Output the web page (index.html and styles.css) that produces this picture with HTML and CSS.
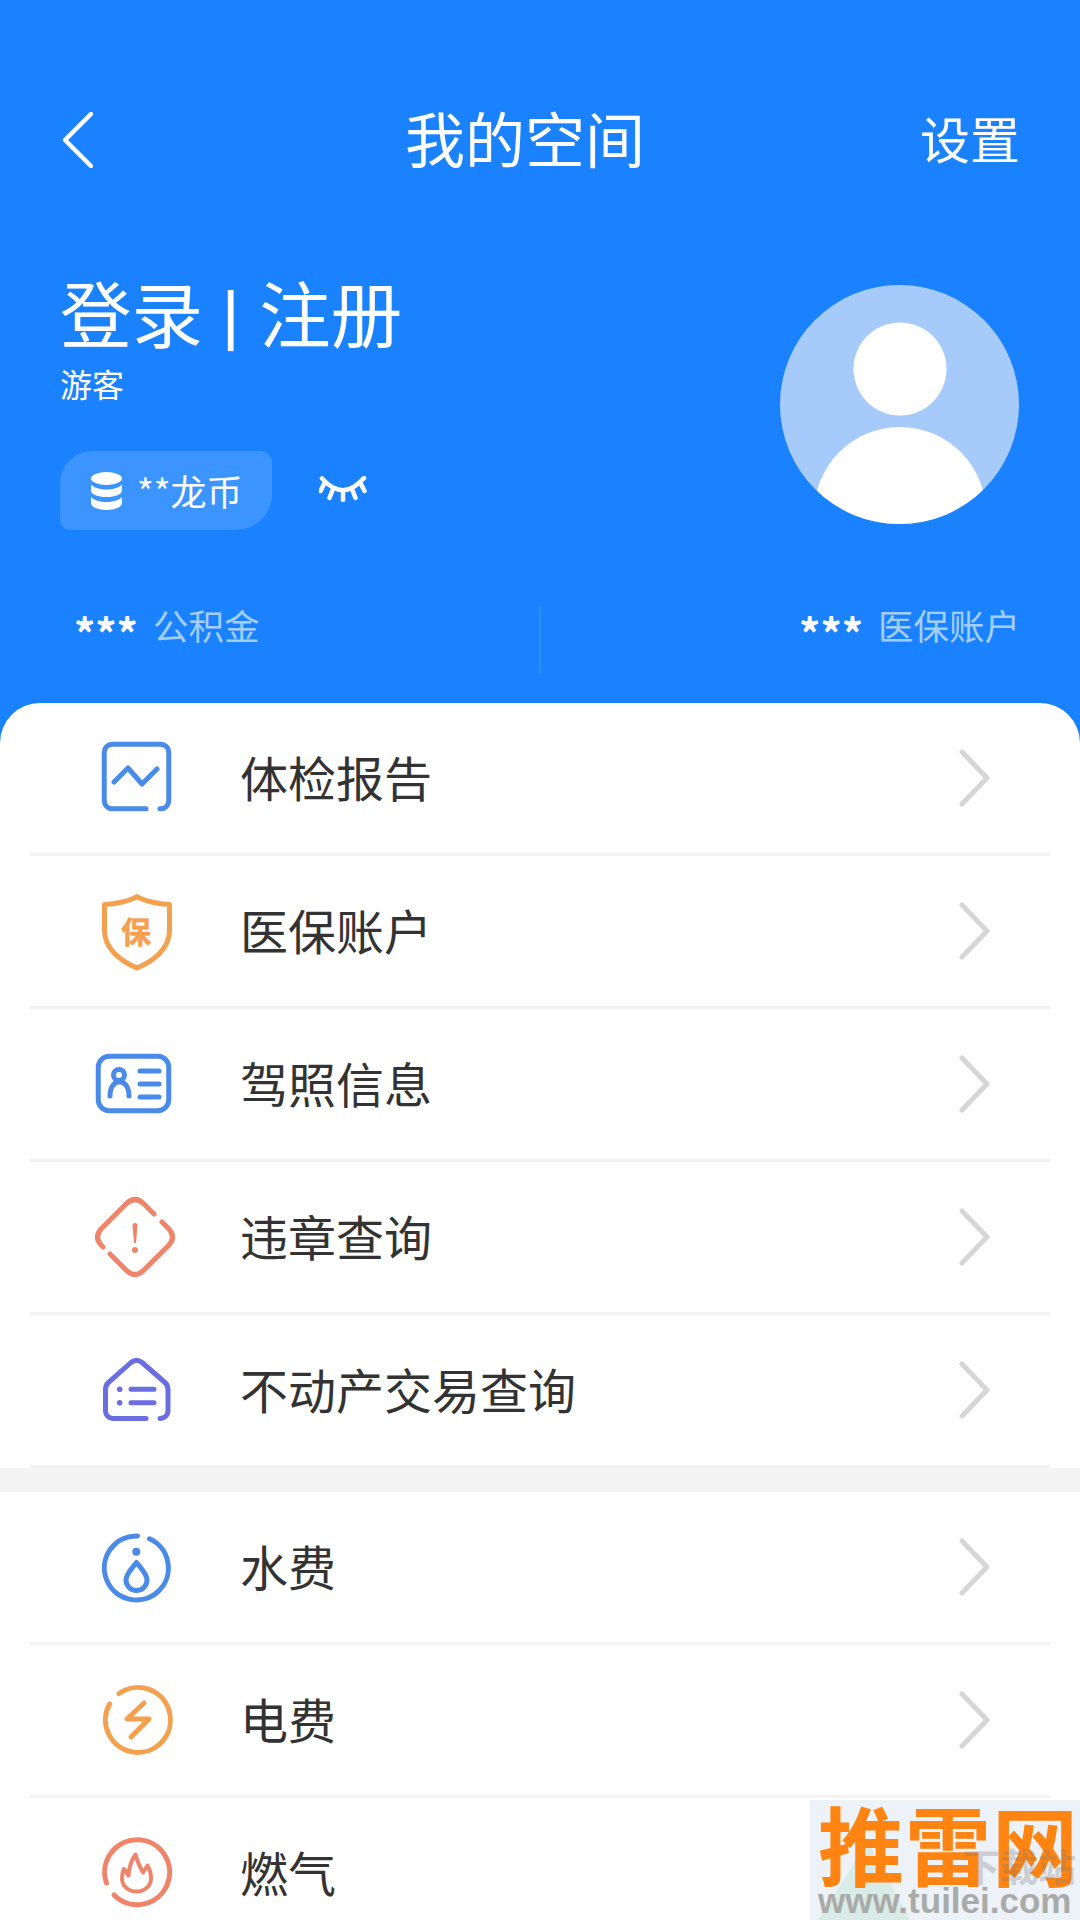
FILE: index.html
```html
<!DOCTYPE html>
<html lang="zh-CN">
<head>
<meta charset="utf-8">
<title>我的空间</title>
<link rel="stylesheet" href="styles.css">
</head>
<body>
<div class="app">
  <header class="hero">
    <nav class="nav">
      <div class="nav-back">
        <svg width="30" height="56" viewBox="0 0 30 56"><path class="line-white" d="M28 2 2 28l26 26"/></svg>
      </div>
      <h1 class="nav-title">我的空间</h1>
      <div class="nav-action">设置</div>
    </nav>
    <section class="profile">
      <div class="profile-info">
        <div class="profile-name">登录<span class="name-sep"> | </span>注册</div>
        <div class="profile-role">游客</div>
        <div class="coin-line">
          <div class="coin-pill">
            <svg width="31" height="38" viewBox="0 0 31 38"><ellipse cx="15.5" cy="6.5" rx="15.5" ry="6.5" fill="#fff"/><path fill="#fff" d="M0 12.5C3 16 9 17.5 15.5 17.5S28 16 31 12.5V18.500C31 22.500 24 25 15.500 25S0 22.500 0 18.500Z"/><path fill="#fff" d="M0 25C3 28.500 9 30 15.500 30S28 28.500 31 25V31C31 35 24 38 15.500 38S0 35 0 31Z"/></svg>
            <span class="coin-text">**龙币</span>
          </div>
          <svg class="eye" width="48" height="26" viewBox="0 0 48 26"><path class="line-white thin" d="M3 2.500Q24 26 45 2M5 8 1.500 15M14 13l-3.500 9M24 15v9M33 13l3.500 9M42 8l3.500 7"/></svg>
        </div>
      </div>
      <svg class="avatar" width="239" height="239" viewBox="0 0 239 239">
        <defs><clipPath id="avatar-clip"><circle cx="119.500" cy="119.500" r="119.500"/></clipPath></defs>
        <circle cx="119.500" cy="119.500" r="119.500" fill="#a6cbfb"/>
        <circle cx="120" cy="84" r="46.500" fill="#fff"/>
        <circle cx="120" cy="228" r="86" fill="#fff" clip-path="url(#avatar-clip)"/>
      </svg>
    </section>
    <section class="stats">
      <div class="stat stat-left"><span class="stat-stars">***</span><span class="stat-label">公积金</span></div>
      <div class="stat-divider"></div>
      <div class="stat stat-right"><span class="stat-stars">***</span><span class="stat-label">医保账户</span></div>
    </section>
  </header>

  <main class="sheet">
    <ul class="list">
      <li class="row">
        <svg class="icon blue" viewBox="0 0 90 90"><path d="M56 75.750H22.250a8 8 0 0 1-8-8v-48.500a8 8 0 0 1 8-8h48.500a8 8 0 0 1 8 8v48.500a8 8 0 0 1-8 8H70M24 49l14-14 14 16 15-15"/></svg>
        <span class="row-label">体检报告</span>
        <svg class="chevron" viewBox="0 0 32 58"><path d="M3 3l25 26L3 55"/></svg>
      </li>
      <li class="row">
        <svg class="icon orange" viewBox="0 0 90 90"><path d="M47 10.500C40 15 26 18 14.500 18.500V45C14.500 62 30 75 47 82 64 75 79.500 62 79.500 45V18.500C68 18 54 15 47 10.500Z"/><text class="icon-text" x="46" y="57">保</text></svg>
        <span class="row-label">医保账户</span>
        <svg class="chevron" viewBox="0 0 32 58"><path d="M3 3l25 26L3 55"/></svg>
      </li>
      <li class="row">
        <svg class="icon blue" viewBox="0 0 90 90"><rect x="8.250" y="17.250" width="70.500" height="54.500" rx="11"/><circle cx="29" cy="36" r="5.500"/><path d="M20 57c0-19 19-19 19 0M50 32h19M50 45h19M50 58h19"/></svg>
        <span class="row-label">驾照信息</span>
        <svg class="chevron" viewBox="0 0 32 58"><path d="M3 3l25 26L3 55"/></svg>
      </li>
      <li class="row">
        <svg class="icon coral" viewBox="0 0 90 90"><path d="M72 30l6 6q9 9 0 18L54 78q-9 9-18 0L20 62M13 55l-1-1q-9-9 0-18L36 12q9-9 18 0l10 10"/><path class="solid" d="M42.500 33.500a2.500 2.500 0 0 1 5 0L46 51h-2Z"/><circle class="solid" cx="45" cy="58" r="3"/></svg>
        <span class="row-label">违章查询</span>
        <svg class="chevron" viewBox="0 0 32 58"><path d="M3 3l25 26L3 55"/></svg>
      </li>
      <li class="row">
        <svg class="icon indigo" viewBox="0 0 90 90"><path d="M56 73.500H23a7.500 7.500 0 0 1-7.500-7.500V44q0-4 3.500-7l22-19.500q5.500-4.500 11 0L74.500 37q3.500 3 3.500 7v22a7.500 7.500 0 0 1-7.500 7.500H70M41 44.300h23M41 57.700h23"/><circle class="solid" cx="29.700" cy="44.300" r="2.800"/><circle class="solid" cx="29.700" cy="57.700" r="2.800"/></svg>
        <span class="row-label">不动产交易查询</span>
        <svg class="chevron" viewBox="0 0 32 58"><path d="M3 3l25 26L3 55"/></svg>
      </li>
    </ul>
    <div class="band"></div>
    <ul class="list">
      <li class="row">
        <svg class="icon blue" viewBox="0 0 90 90"><path d="M59.500 16.800A32 32 0 1 1 47.500 14M46.500 40.500C42 46 36 52 36 58a10.500 10.500 0 0 0 21 0C57 52 51 46 46.500 40.500Z"/><circle class="solid" cx="46.300" cy="29.700" r="4"/></svg>
        <span class="row-label">水费</span>
        <svg class="chevron" viewBox="0 0 32 58"><path d="M3 3l25 26L3 55"/></svg>
      </li>
      <li class="row">
        <svg class="icon orange" viewBox="0 0 90 90"><path d="M29 18.500A32.500 32.500 0 1 1 19.600 29M54 28 37 44h22L41 62"/></svg>
        <span class="row-label">电费</span>
        <svg class="chevron" viewBox="0 0 32 58"><path d="M3 3l25 26L3 55"/></svg>
      </li>
      <li class="row">
        <svg class="icon coral" viewBox="0 0 90 90"><path d="M24 67A32.500 32.500 0 1 0 16.500 55"/><path class="flame" d="M46.500 63.500C38 63.500 32 57.500 32 50.500 32 47 32.500 44 34 41L38.500 47.500C39 40 41.500 32 45.500 26.500 47 33 50 39 53 44.500L57.500 37.500C60 41.500 61 46 61 50.500 61 57.500 55 63.500 46.500 63.500Z"/></svg>
        <span class="row-label">燃气</span>
        <svg class="chevron" viewBox="0 0 32 58"><path d="M3 3l25 26L3 55"/></svg>
      </li>
    </ul>
  </main>

  <aside class="watermark">
    <svg class="wm-logo" width="150" height="120" viewBox="0 0 150 120"><path d="M8 120 58 42 100 120Z" fill="#d9ebe6"/></svg>
    <div class="wm-brand">推雷网</div>
    <div class="wm-faint">下载站</div>
    <div class="wm-url">www.tuilei.com</div>
  </aside>
</div>
</body>
</html>
```

FILE: styles.css
```css
* { box-sizing: border-box; }

html, body {
  margin: 0;
  padding: 0;
}

body {
  font-family: "Noto Sans CJK SC", "Noto Sans", sans-serif;
  color: #333;
}

ul { list-style: none; margin: 0; padding: 0; }
h1 { margin: 0; font: inherit; }

.app {
  position: relative;
  width: 1080px;
  height: 1920px;
  overflow: hidden;
  background: #1a82ff;
}

/* Header */
.hero {
  height: 703px;
  padding: 100px 60px 0;
  color: #fff;
}

.nav {
  display: grid;
  grid-template-columns: 70px 1fr auto;
  align-items: center;
  height: 80px;
}

.nav-back { display: flex; padding-left: 3px; }

.line-white {
  fill: none;
  stroke: #fff;
  stroke-width: 4.5;
  stroke-linecap: round;
  stroke-linejoin: round;
}

.nav-title {
  font-size: 60px;
  line-height: 72px;
  padding-bottom: 6px;
  text-align: center;
}

.nav-action {
  font-size: 50px;
  line-height: 72px;
  padding-bottom: 6px;
}

.profile {
  display: flex;
  justify-content: space-between;
  align-items: flex-start;
  margin-top: 96px;
}

.profile-name {
  height: 80px;
  font-size: 71.5px;
  line-height: 70px;
  white-space: pre;
}

.name-sep {
  font-family: Roboto, "Liberation Sans", sans-serif;
  font-weight: 500;
  letter-spacing: 1px;
}

.profile-role {
  margin-top: 7px;
  font-size: 32px;
  line-height: 40px;
}

.coin-line {
  display: flex;
  align-items: center;
  gap: 47px;
  margin-top: 48px;
}

.coin-pill {
  display: flex;
  align-items: center;
  gap: 15px;
  width: 212px;
  height: 79px;
  padding-left: 31px;
  background: #3b94ff;
  border-radius: 32px 12px 36px 10px;
}

.coin-text {
  font-size: 36px;
  line-height: 40px;
  padding-bottom: 2px;
}

.eye { display: block; margin-bottom: 3px; }

.avatar {
  display: block;
  margin: 9px 1px 0 0;
}

.stats {
  display: grid;
  grid-template-columns: 1fr 2px 1fr;
  margin-top: 76px;
  height: 68px;
}

.stat {
  display: flex;
  align-items: center;
  gap: 15px;
  height: 40px;
}

.stat-left { padding-left: 14px; }
.stat-right { justify-content: flex-end; }

.stat-stars {
  font-size: 42px;
  font-weight: 700;
  line-height: 40px;
  padding-top: 12px;
}

.stat-label {
  font-size: 35.5px;
  line-height: 40px;
  padding-bottom: 2px;
  color: #a3cefc;
}

.stat-divider {
  background: rgba(255, 255, 255, 0.1);
}

/* Lists */
.sheet {
  height: 1217px;
  background: #fff;
  border-radius: 40px 40px 0 0;
}

.row {
  display: flex;
  align-items: center;
  height: 153px;
  margin: 0 30px;
  padding: 0 59px 0 60px;
  border-bottom: 3px solid #f3f3f3;
}

.list:last-child .row:last-child { border-bottom: 0; height: 150px; }

.icon {
  flex: none;
  width: 90px;
  height: 90px;
  fill: none;
  stroke-width: 5;
  stroke-linecap: round;
  stroke-linejoin: round;
}

.icon.blue { stroke: #4a8ae8; }
.icon.orange { stroke: #f5a04f; }
.icon.coral { stroke: #f0846a; }
.icon.indigo { stroke: #6a6ee0; }

.icon .solid { stroke: none; }
.icon.blue .solid { fill: #4a8ae8; }
.icon.coral .solid { fill: #f0846a; }
.icon.indigo .solid { fill: #6a6ee0; }

.icon .flame { stroke-width: 4; }

.icon-text {
  fill: #f5a04f;
  stroke: #f5a04f;
  stroke-width: 0.6;
  font-size: 30px;
  font-weight: 700;
  text-anchor: middle;
}

.row-label {
  flex: 1;
  margin-left: 60px;
  padding-bottom: 5px;
  font-size: 48px;
  line-height: 60px;
  color: #333;
}

.chevron {
  flex: none;
  width: 32px;
  height: 58px;
  fill: none;
  stroke: #d6d6d6;
  stroke-width: 5;
  stroke-linecap: round;
  stroke-linejoin: round;
}

.band {
  height: 24px;
  background: #f4f4f4;
}

/* Watermark stamped over the corner */
.watermark {
  position: absolute;
  right: 0;
  bottom: 0;
  width: 270px;
  height: 120px;
  padding-left: 8px;
  background: #edf1f8;
  font-family: "Noto Sans CJK SC", sans-serif;
}

.wm-logo {
  position: absolute;
  left: 0;
  top: 0;
}

.wm-brand {
  position: relative;
  font-size: 86px;
  font-weight: 700;
  line-height: 86px;
  letter-spacing: 1px;
  color: #ff8412;
  white-space: nowrap;
}

.wm-faint {
  position: absolute;
  right: 4px;
  top: 40px;
  font-size: 38px;
  line-height: 50px;
  font-weight: 700;
  color: rgba(120, 120, 120, 0.3);
  white-space: nowrap;
}

.wm-url {
  position: relative;
  font-family: "Liberation Sans", Arial, sans-serif;
  font-size: 35px;
  font-weight: 700;
  line-height: 30px;
  color: #a9aba9;
  white-space: nowrap;
}
```
